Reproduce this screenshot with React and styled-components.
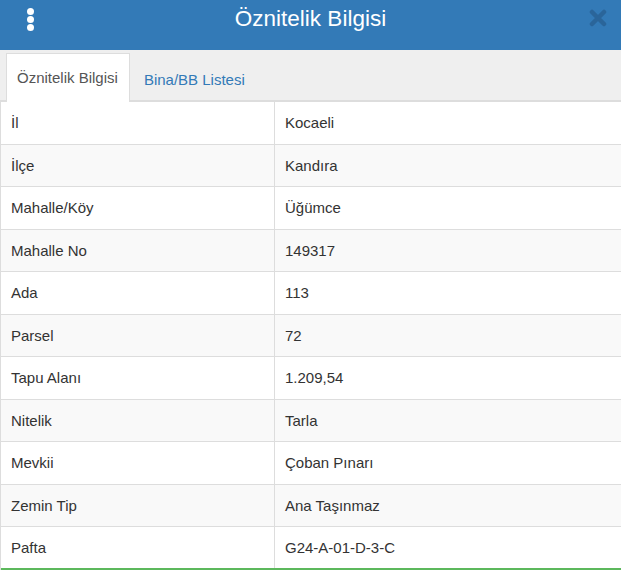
import React from 'react';
import styled, { createGlobalStyle } from 'styled-components';

const rows = [
  ['İl', 'Kocaeli'],
  ['İlçe', 'Kandıra'],
  ['Mahalle/Köy', 'Üğümce'],
  ['Mahalle No', '149317'],
  ['Ada', '113'],
  ['Parsel', '72'],
  ['Tapu Alanı', '1.209,54'],
  ['Nitelik', 'Tarla'],
  ['Mevkii', 'Çoban Pınarı'],
  ['Zemin Tip', 'Ana Taşınmaz'],
  ['Pafta', 'G24-A-01-D-3-C'],
];

const Global = createGlobalStyle`
  body {
    margin: 0;
    font-family: "Liberation Sans", Arial, sans-serif;
    font-size: 15px;
    color: #333;
    background: #fff;
  }
`;

const Panel = styled.div`
  width: 621px;
  height: 571px;
  overflow: hidden;
`;

const Header = styled.div`
  height: 50px;
  background: #337ab7;
  display: grid;
  grid-template-columns: 60px 1fr 60px;
  align-items: center;
`;

const Dots = styled.div`
  display: flex;
  flex-direction: column;
  align-items: center;
  gap: 1px;
  margin-top: -12px;
  span {
    width: 7px;
    height: 7px;
    border-radius: 50%;
    background: #fff;
  }
`;

const Title = styled.h3`
  margin: 0 0 12px;
  text-align: center;
  color: #fff;
  font-size: 22.5px;
  font-weight: 400;
`;

const Close = styled.div`
  display: flex;
  justify-content: flex-end;
  padding-right: 14px;
  margin-top: -14px;
`;

const TabBar = styled.div`
  background: #efefef;
  height: 52px;
  box-sizing: border-box;
  padding: 5px 6px 0;
  border-bottom: 2px solid #ddd;
  display: flex;
  align-items: flex-end;
`;

const Tab = styled.div`
  box-sizing: border-box;
  padding: 0 11px 0 10px;
  margin-right: 3px;
  margin-bottom: -2px;
  height: 47px;
  line-height: 47px;
  color: ${(p) => (p.active ? '#555' : '#337ab7')};
  background: ${(p) => (p.active ? '#fff' : 'transparent')};
  border: 1px solid ${(p) => (p.active ? '#ddd' : 'transparent')};
  border-bottom: none;
  ${(p) => p.active && 'height: 49px; line-height: 47px;'}
`;

const Table = styled.div`
  border-left: 1px solid #ddd;
`;

const Row = styled.div`
  display: grid;
  grid-template-columns: 273px 1fr;
  height: 42.5px;
  box-sizing: border-box;
  align-items: center;
  background: ${(p) => (p.striped ? '#f9f9f9' : '#fff')};
  border-bottom: ${(p) => (p.last ? '2px solid #5cb85c' : '1px solid #ddd')};
`;

const Cell = styled.div`
  height: 100%;
  display: flex;
  align-items: center;
  padding: 0 10px;
  border-left: ${(p) => (p.divider ? '1px solid #ddd' : 'none')};
`;

export default function App() {
  return (
    <Panel>
      <Global />
      <Header>
        <Dots>
          <span />
          <span />
          <span />
        </Dots>
        <Title>Öznitelik Bilgisi</Title>
        <Close>
          <svg width="18" height="18" viewBox="0 0 18 18">
            <path d="M3 3 L15 15 M15 3 L3 15" stroke="#2a659a" strokeWidth="4.5" strokeLinecap="round" />
          </svg>
        </Close>
      </Header>
      <TabBar>
        <Tab active>Öznitelik Bilgisi</Tab>
        <Tab>Bina/BB Listesi</Tab>
      </TabBar>
      <Table>
        {rows.map(([k, v], i) => (
          <Row key={k} striped={i % 2 === 1} last={i === rows.length - 1}>
            <Cell>{k}</Cell>
            <Cell divider>{v}</Cell>
          </Row>
        ))}
      </Table>
    </Panel>
  );
}
